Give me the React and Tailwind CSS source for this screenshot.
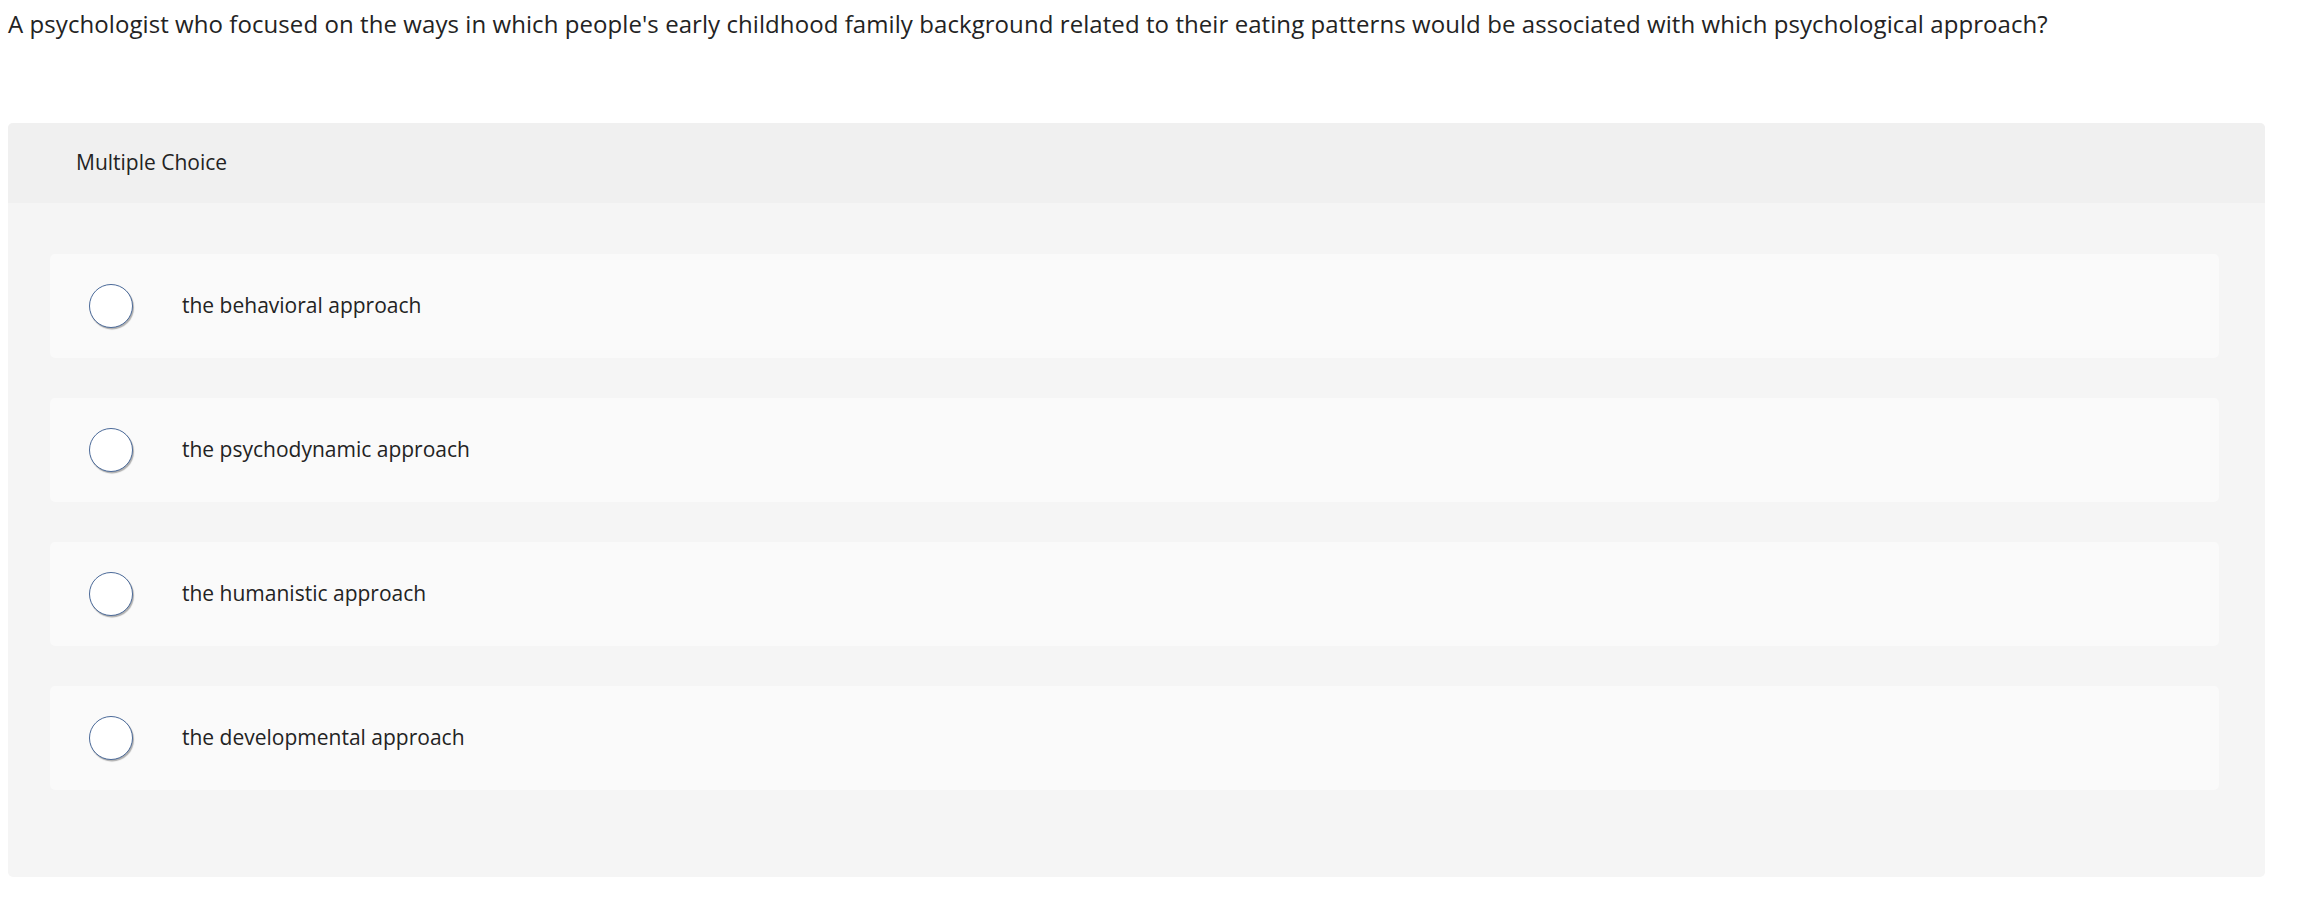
import React from "react";

const options = [
  "the behavioral approach",
  "the psychodynamic approach",
  "the humanistic approach",
  "the developmental approach",
];

function Radio() {
  return (
    <span className="block w-[44px] h-[44px] shrink-0 rounded-full bg-white border border-[#4b6a99] shadow-[1px_1.5px_1px_rgba(0,0,0,0.3)]" />
  );
}

export default function App() {
  return (
    <div className="min-h-screen bg-white text-[#232323] font-['Open_Sans',sans-serif]">
      <p className="pl-[8px] pt-[9px] text-[24px] leading-[30px] tracking-[0.07px]">
        A psychologist who focused on the ways in which people's early childhood family background related to their eating patterns would be associated with which psychological approach?
      </p>

      <div className="mt-[84px] ml-[8px] w-[2257px] rounded-[5px] bg-[#f5f5f5] overflow-hidden">
        <div className="h-[80px] bg-[#f0f0f0] flex items-center pl-[68px] text-[21px]">
          Multiple Choice
        </div>
        <div className="pt-[51px] pb-[87px] pl-[42px] pr-[46px] flex flex-col gap-[40px]">
          {options.map((opt) => (
            <div key={opt} className="h-[104px] rounded-[5px] bg-[#fafafa] flex items-center pl-[39px]">
              <Radio />
              <span className="ml-[49px] text-[21px]">{opt}</span>
            </div>
          ))}
        </div>
      </div>
    </div>
  );
}
